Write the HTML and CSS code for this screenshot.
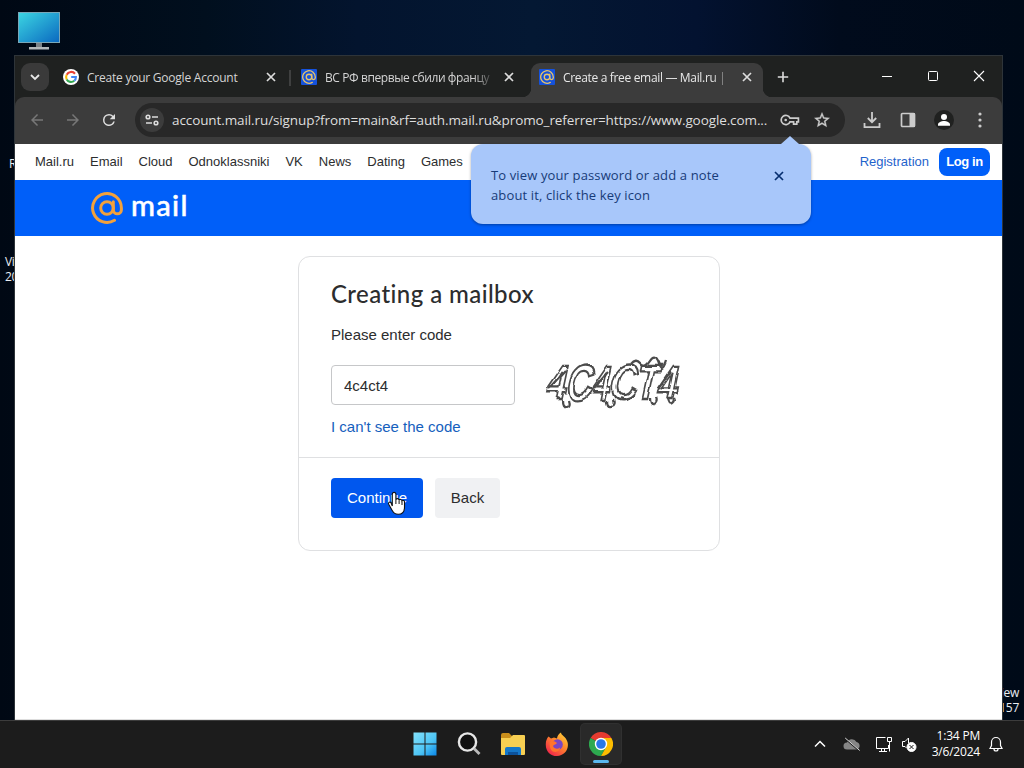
FILE: index.html
```html
<!doctype html>
<html lang="en">
<head>
<meta charset="utf-8">
<meta name="viewport" content="width=device-width,initial-scale=1.0">
<title>Create a free email — Mail.ru</title>
<link rel="stylesheet" href="styles.css">
</head>
<body>
<svg width="0" height="0" class="defs">
	<defs>
		<symbol id="at" viewBox="0 0 32 32">
			<circle cx="16" cy="16" r="6.3" fill="none" stroke="currentColor" stroke-width="3"/>
			<path d="M22.3 9.7v8.1a4.05 4.05 0 0 0 8.1 0V16A14.4 14.4 0 1 0 23.5 28.3" fill="none" stroke="currentColor" stroke-width="3" stroke-linecap="round"/>
		</symbol>
		<symbol id="cross" viewBox="0 0 10 10">
			<path d="M1 1l8 8M9 1L1 9" fill="none" stroke="currentColor" stroke-width="1.7"/>
		</symbol>
		<filter id="rough" x="-5%" y="-10%" width="110%" height="120%">
			<feTurbulence type="fractalNoise" baseFrequency="0.05" numOctaves="1" seed="4"/>
			<feDisplacementMap in="SourceGraphic" scale="8" xChannelSelector="R" yChannelSelector="G"/>
			<feGaussianBlur stdDeviation="0.4"/>
		</filter>
	</defs>
</svg>
<div class="desktop">
	<!-- desktop shortcuts -->
	<svg class="pc-icon" width="42" height="39" viewBox="0 0 42 39">
		<defs><linearGradient id="screen" x1="0" y1="0" x2="1" y2="1"><stop offset="0" stop-color="#3cd6e2"/><stop offset="1" stop-color="#0a68c0"/></linearGradient></defs>
		<rect x=".5" y=".5" width="41" height="30" fill="url(#screen)" stroke="#7aa7b8"/>
		<path d="M18 31h6v4h-6z" fill="#7b8287"/><path d="M11 35h20v2.5H11z" fill="#b3b8bb"/>
	</svg>
	<span class="label label-r">R</span>
	<span class="label label-v">Vi<br>20</span>
	<span class="label label-w">iew<br>157</span>

	<div class="window">
		<div class="tabstrip">
			<div class="tab-search"><svg width="10" height="7" viewBox="0 0 10 7"><path d="M1 1l4 4 4-4" fill="none" stroke="#e8e8e8" stroke-width="1.8"/></svg></div>
			<div class="tab">
				<svg class="favicon" viewBox="0 0 16 16">
					<circle cx="8" cy="8" r="8" fill="#fff"/>
					<g fill="none" stroke-width="2.1">
						<path d="M12 4.7A5 5 0 0 0 3.7 5.7" stroke="#ea4335"/>
						<path d="M3.7 5.7a5 5 0 0 0 0 4.7" stroke="#fbbc05"/>
						<path d="M3.7 10.4a5 5 0 0 0 7.6 1.4" stroke="#34a853"/>
						<path d="M11.3 11.8A5 5 0 0 0 12.9 8H8.2" stroke="#4285f4"/>
					</g>
				</svg>
				<span class="tab-title t1">Create your Google Account</span>
				<svg class="tab-close"><use href="#cross"/></svg>
			</div>
			<i class="tab-sep"></i>
			<div class="tab">
				<span class="favicon mail-fav"><svg><use href="#at"/></svg></span>
				<span class="tab-title t2">ВС РФ впервые сбили францу</span>
				<svg class="tab-close"><use href="#cross"/></svg>
			</div>
			<i class="tab-sep off"></i>
			<div class="tab active">
				<span class="favicon mail-fav"><svg><use href="#at"/></svg></span>
				<span class="tab-title t3">Create a free email — Mail.ru |</span>
				<svg class="tab-close"><use href="#cross"/></svg>
			</div>
			<svg class="new-tab" width="12" height="12" viewBox="0 0 12 12"><path d="M6 .8v10.4M.8 6h10.4" stroke="#ddd" stroke-width="1.6"/></svg>
			<div class="win-buttons">
				<svg width="46" height="20" viewBox="0 0 46 20"><path d="M18 10.5h10" stroke="#fff"/></svg>
				<svg width="46" height="20" viewBox="0 0 46 20"><rect x="18.5" y="5.5" width="9" height="9" rx="1" fill="none" stroke="#fff"/></svg>
				<svg width="46" height="20" viewBox="0 0 46 20"><path d="M18 5l10 10M28 5L18 15" stroke="#fff" stroke-width="1.1"/></svg>
			</div>
		</div>

		<div class="toolbar">
			<svg class="nav-btn" viewBox="0 0 24 24" fill="#777"><path d="M20 11H7.83l5.59-5.59L12 4l-8 8 8 8 1.41-1.41L7.83 13H20z"/></svg>
			<svg class="nav-btn" viewBox="0 0 24 24" fill="#777"><path d="M12 4l-1.41 1.41L16.17 11H4v2h12.17l-5.58 5.59L12 20l8-8z"/></svg>
			<svg class="nav-btn" viewBox="0 0 24 24" fill="#ddd"><path d="M17.65 6.35A7.96 7.96 0 0 0 12 4a8 8 0 1 0 7.73 10h-2.08A6 6 0 1 1 12 6c1.66 0 3.14.69 4.22 1.78L13 11h7V4z"/></svg>
			<div class="omnibox">
				<div class="site-info">
					<svg width="14" height="12" viewBox="0 0 14 12" fill="none" stroke="#ddd" stroke-width="1.6"><circle cx="3" cy="3" r="1.8"/><path d="M7 3h6M1 9h6"/><circle cx="11" cy="9" r="1.8"/></svg>
				</div>
				<span class="url">account.mail.ru/signup?from=main&amp;rf=auth.mail.ru&amp;promo_referrer=https://www.google.com...</span>
				<svg class="key" width="20" height="12" viewBox="0 0 20 12" fill="none" stroke="#ccc" stroke-width="1.7"><path d="M10 4.2h8.4v3.6h-1.6v2.4h-3.2V7.8H10A4.6 4.6 0 1 1 10 4.2z"/><circle cx="5.7" cy="6" r="1.3" fill="#ccc" stroke="none"/></svg>
				<svg class="star" width="18" height="18" viewBox="0 0 24 24" fill="#ccc" stroke="#ccc" stroke-width=".5"><path d="M22 9.24l-7.19-.62L12 2 9.19 8.63 2 9.24l5.46 4.73L5.82 21 12 17.27 18.18 21l-1.63-7.03zM12 15.4l-3.76 2.27 1-4.28-3.32-2.88 4.38-.38L12 6.1l1.71 4.04 4.38.38-3.32 2.88 1 4.28z"/></svg>
			</div>
			<div class="actions">
				<svg width="18" height="18" viewBox="0 0 18 18" fill="none" stroke="#ccc" stroke-width="1.8"><path d="M9 1v10M4.8 7L9 11.2 13.2 7M1.5 12v4.2h15V12"/></svg>
				<svg width="18" height="18" viewBox="0 0 18 18"><rect x="2.5" y="2.5" width="13" height="13" rx="1" fill="none" stroke="#ccc" stroke-width="1.7"/><path d="M10.5 2h5.5v14h-5.5z" fill="#ccc"/></svg>
				<svg width="20" height="20" viewBox="0 0 20 20"><circle cx="10" cy="10" r="10" fill="#202120"/><circle cx="10" cy="7" r="3" fill="#fff"/><path d="M4 15.7v-1.4c0-2.1 3.5-3.4 6-3.4s6 1.3 6 3.4v1.4z" fill="#fff"/></svg>
				<svg width="4" height="16" viewBox="0 0 4 16" fill="#ccc"><circle cx="2" cy="2" r="1.6"/><circle cx="2" cy="8" r="1.6"/><circle cx="2" cy="14" r="1.6"/></svg>
			</div>
		</div>

		<div class="page">
			<nav class="portal-nav">
				<a>Mail.ru</a><a>Email</a><a>Cloud</a><a>Odnoklassniki</a><a>VK</a><a>News</a><a>Dating</a><a>Games</a>
				<a class="registration">Registration</a>
				<button class="login">Log in</button>
			</nav>
			<header class="brand">
				<svg class="brand-at"><use href="#at"/></svg>
				<span class="brand-name">mail</span>
			</header>
			<form class="card">
				<div class="card-body">
					<h1>Creating a mailbox</h1>
					<p>Please enter code</p>
					<div class="code-row">
						<input type="text" value="4c4ct4">
						<svg class="captcha" width="142" height="60" viewBox="0 0 142 60">
							<g filter="url(#rough)">
								<g transform="skewX(-12)" class="captcha-text">
									<text x="12" y="47" textLength="130" lengthAdjust="spacingAndGlyphs">4C4CT4</text>
								</g>
								<g fill="none" stroke="#4b4b4b" stroke-width="2.3">
									<path d="M19 48q0 7 4 6t2-7M64 48q0 7 4 6t2-7M107 46q0 7 4 6t2-7M125 47q1 7 4 5t1-6M88 13q5-6 9-1t9-3 9 3 8-2"/>
									<path d="M6 37l17-18M50 37l16-18M116 36l12-17M77 45q7 4 14-4"/>
								</g>
							</g>
						</svg>
					</div>
					<a class="help">I can't see the code</a>
				</div>
				<div class="card-footer">
					<button type="button" class="btn primary">Continue</button>
					<button type="button" class="btn">Back</button>
				</div>
			</form>
		</div>
	</div>

	<div class="key-hint">
		<p>To view your password or add a note<br>about it, click the key icon</p>
		<svg width="10" height="10"><use href="#cross"/></svg>
	</div>

	<svg class="cursor" width="19" height="25" viewBox="0 0 19 25">
		<path d="M5.3 15V3.2a1.8 1.8 0 0 1 3.6 0V9c.2-1.9 3.1-1.8 3.2.3.6-1.4 2.8-1.1 2.9.7.8-1 2.5-.5 2.5 1.1v5c0 4.5-2.2 7.2-6.3 7.2-3.2 0-4.8-1.5-6-3.8l-3.5-6.2c-.9-1.7 1-3 2.3-1.6z" fill="#fff" stroke="#111" stroke-width="1.1"/>
		<path d="M8.9 9v4M12.1 9.5V13M15 10.5V14" stroke="#111"/>
	</svg>

	<div class="taskbar">
		<div class="apps">
			<span class="app"><svg width="24" height="24" viewBox="0 0 24 24">
				<defs><linearGradient id="win" x1="0" y1="0" x2="1" y2="1"><stop offset="0" stop-color="#84e2fb"/><stop offset=".6" stop-color="#4cc4f5"/><stop offset="1" stop-color="#0a86e8"/></linearGradient></defs>
				<path d="M.5.5h11v11H.5zM12.5.5h11v11h-11zM.5 12.5h11v11H.5zM12.5 12.5h11v11h-11z" fill="url(#win)"/></svg></span>
			<span class="app"><svg width="24" height="24" viewBox="0 0 24 24"><circle cx="10.5" cy="10" r="8.6" fill="#111" stroke="#e6e6e6" stroke-width="2.4"/><path d="M17 16.5l5.5 5.5" stroke="#bbb" stroke-width="2.8"/></svg></span>
			<span class="app"><svg width="26" height="24" viewBox="0 0 26 24"><path d="M1 3q0-2 2-2h6l3 3h12q1 0 1 1v4H1z" fill="#c98e1b"/><path d="M1 6h9l3-3h11q1 0 1 1v18q0 1-1 1H2q-1 0-1-1z" fill="#f7cf52"/><path d="M5 23v-6q0-2 2-2h12q2 0 2 2v6z" fill="#1477c9"/><path d="M8 23v-3h10v3z" fill="#0c529b"/></svg></span>
			<span class="app"><svg width="24" height="24" viewBox="0 0 24 24">
				<defs><linearGradient id="fox" x1="1" y1="0" x2=".2" y2="1"><stop offset="0" stop-color="#ffe23d"/><stop offset=".45" stop-color="#ff8a2b"/><stop offset="1" stop-color="#f0204c"/></linearGradient></defs>
				<path d="M3.5 4.5l2.5 2 3-1 3 1C12 4 14 1.5 16 .5c0 3 5 4 6.5 9.5C24.5 17.5 19 24 12 24S.5 19 .8 12c0-3 1-5.5 2.7-7.5z" fill="url(#fox)"/>
				<circle cx="12.5" cy="12.5" r="5.3" fill="#7846c4"/><path d="M5 10c2-2 5-1 7 1-1 2-3 1-4 3 1 3 5 3.5 7 1.5 0 3-3 5-6 4.3S4 15 5 10z" fill="#ff742d"/></svg></span>
			<span class="app current"><svg width="24" height="24" viewBox="0 0 24 24">
				<path d="M12 12L1.6 6A12 12 0 0 1 22.4 6z" fill="#e53b30"/>
				<path d="M12 12L1.6 6A12 12 0 0 0 12 24l5.2-9z" fill="#2da94f"/>
				<path d="M12 6h10.4A12 12 0 0 1 12 24l5.2-9z" fill="#fdbd00"/>
				<circle cx="12" cy="12" r="6.2" fill="#fff"/><circle cx="12" cy="12" r="4.8" fill="#2877e8"/></svg></span>
		</div>
		<div class="tray">
			<svg class="up" width="12" height="8" viewBox="0 0 12 8"><path d="M1 6.5l5-5 5 5" fill="none" stroke="#fff" stroke-width="1.5"/></svg>
			<svg class="cloud" width="18" height="14" viewBox="0 0 18 14"><path d="M4 12.5a3.5 3.5 0 0 1 0-7A5.2 5.2 0 0 1 13.5 5a3.9 3.9 0 0 1 .5 7.5z" fill="#858585"/><path d="M1.5 1l14.5 12.5" stroke="#1c1c1c" stroke-width="1.6"/><path d="M2.2 1l14.5 12.5" stroke="#ddd"/></svg>
			<svg class="net" width="17" height="17" viewBox="0 0 17 17" fill="none" stroke="#fff"><path d="M10.5 1.5h-9v11h12V9M4 15.5h8M6.5 12.5v3M9.5 12.5v3M12.5 1.5h4v4h-4zM14.5 5.5v10"/></svg>
			<svg class="sound" width="16" height="15" viewBox="0 0 16 15" fill="none" stroke="#fff"><path d="M7.5 6V1L4 4.5H1.5v5H4l1.5 1.5"/><circle cx="10.5" cy="10" r="4.5" fill="#fff"/><path d="M8.5 8l4 4M12.5 8l-4 4" stroke="#1c1c1c"/></svg>
			<div class="clock">1:34 PM<br>3/6/2024</div>
			<svg class="bell" width="14" height="16" viewBox="0 0 14 16" fill="none" stroke="#fff" stroke-width="1.2"><path d="M1 12.5l1.5-3V6a4.5 4.5 0 0 1 9 0v3.5l1.5 3zM5 13a2 2 0 0 0 4 0"/></svg>
		</div>
	</div>
</div>
</body>
</html>
```
FILE: styles.css
```css
*{
	box-sizing: border-box;
}
body{
	margin: 0;
	overflow: hidden;
	font-family: "Liberation Sans", Arial, sans-serif;
}
svg{
	display: block;
	flex: none;
}
.defs{
	position: absolute;
}
.desktop{
	position: relative;
	width: 1024px;
	height: 768px;
	overflow: hidden;
	background: linear-gradient(90deg, #000814 0%, #010f1e 20%, #03142e 35%, #041833 52%, #031230 68%, #010b1c 82%, #000a18 100%);
}
.pc-icon{
	position: absolute;
	left: 18px;
	top: 12px;
}
.label{
	position: absolute;
	color: #e9edf2;
	font: 12px/15px "Open Sans", sans-serif;
	letter-spacing: -0.3px;
}
.label-r{
	left: 9px;
	top: 156px;
}
.label-v{
	left: 5px;
	top: 254px;
}
.label-w{
	right: 5px;
	top: 685px;
	text-align: right;
}

/* browser window */
.window{
	position: absolute;
	left: 15px;
	top: 56px;
	width: 987px;
	height: 664px;
	display: flex;
	flex-direction: column;
	background: #1f2020;
	box-shadow: 0 0 0 1px #2e3439;
}
.tabstrip{
	height: 41px;
	display: flex;
	align-items: flex-start;
	padding: 7px 0 0 6px;
	background: #1f2120;
}
.tab-search{
	width: 28px;
	height: 28px;
	margin-right: 6px;
	border-radius: 9px;
	background: #3a3a3a;
	display: flex;
	align-items: center;
	justify-content: center;
}
.tab{
	width: 232px;
	height: 28px;
	padding: 0 11px 0 8px;
	display: flex;
	align-items: center;
	flex: none;
}
.tab.active{
	position: relative;
	height: 34px;
	padding-bottom: 6px;
	border-radius: 9px 9px 0 0;
	background: #3c3c3c;
}
.tab.active::before,
.tab.active::after{
	content: "";
	position: absolute;
	bottom: 0;
	width: 9px;
	height: 9px;
}
.tab.active::before{
	left: -9px;
	background: radial-gradient(circle at 0 0, transparent 9px, #3c3c3c 9.5px);
}
.tab.active::after{
	right: -9px;
	background: radial-gradient(circle at 100% 0, transparent 9px, #3c3c3c 9.5px);
}
.favicon{
	width: 16px;
	height: 16px;
	flex: none;
	margin-right: 8px;
}
.mail-fav{
	background: #1552dc;
	border-radius: 1px;
	padding: 1px;
	color: #e8c46a;
}
.mail-fav svg{
	width: 14px;
	height: 14px;
}
.tab-title{
	width: 168px;
	margin-top: 2px;
	white-space: nowrap;
	font: 12px/20px "Open Sans", sans-serif;
	letter-spacing: -0.23px;
	color: #d4d4d4;
}
.t2,
.t3{
	-webkit-mask-image: linear-gradient(90deg, #000 148px, transparent 170px);
	mask-image: linear-gradient(90deg, #000 148px, transparent 170px);
}
.t2{
	letter-spacing: -0.4px;
}
.t3{
	letter-spacing: -0.33px;
	color: #e8e8e8;
}
.tab-close{
	width: 10px;
	height: 10px;
	margin-left: auto;
	color: #ddd;
}
.tab-sep{
	width: 2px;
	height: 16px;
	margin: 7px 2px 0;
	background: #3f4040;
	flex: none;
}
.tab-sep.off{
	background: none;
}
.new-tab{
	margin: 8px 0 0 14px;
}
.win-buttons{
	display: flex;
	margin: 3px 0 0 auto;
}
.toolbar{
	height: 47px;
	padding: 0 20px 1px 13px;
	display: flex;
	align-items: center;
	border-radius: 9px 9px 0 0;
	background: #3c3c3c;
}
.nav-btn{
	width: 18px;
	height: 18px;
	margin-right: 18px;
}
.omnibox{
	width: 710px;
	height: 34px;
	margin-left: -1px;
	border-radius: 17px;
	background: #282828;
	display: flex;
	align-items: center;
	padding: 0 14px 0 5px;
}
.site-info{
	width: 24px;
	height: 24px;
	border-radius: 12px;
	background: #3c3c3c;
	display: flex;
	align-items: center;
	justify-content: center;
	margin-right: 8px;
}
.url{
	font: 13.5px/20px "Open Sans", sans-serif;
	letter-spacing: -0.1px;
	color: #dedede;
	white-space: nowrap;
	width: 600px;
}
.key{
	margin-left: auto;
}
.star{
	margin-left: 13px;
}
.actions{
	margin-left: auto;
	display: flex;
	align-items: center;
	gap: 18px;
}
.actions svg:nth-child(3){
	margin-left: -1px;
}
.actions svg:last-child{
	margin-left: 6px;
}

/* mail.ru page */
.page{
	flex: 1;
	background: #fff;
	border-bottom: 1px solid #ddd;
}
.portal-nav{
	height: 36px;
	padding: 0 12px 0 20px;
	display: flex;
	align-items: center;
	gap: 16px;
	font-size: 13px;
	color: #2c2d2e;
}
.portal-nav a{
	margin-top: -2px;
}
.portal-nav .registration{
	margin-left: auto;
	color: #1f63cc;
}
.login{
	width: 51px;
	height: 28px;
	margin-left: -6px;
	padding: 0 0 2px;
	border: 0;
	border-radius: 8px;
	background: #005ff9;
	color: #fff;
	font: bold 13px "Liberation Sans", Arial, sans-serif;
	letter-spacing: -0.4px;
}
.brand{
	height: 56px;
	padding-left: 76px;
	display: flex;
	align-items: center;
	background: #005ff9;
}
.brand-at{
	width: 32px;
	height: 32px;
	color: #f2a13c;
}
.brand-name{
	margin: -6px 0 0 8px;
	color: #fff;
	font: 500 29px/34px Lato, sans-serif;
	letter-spacing: 1.3px;
	-webkit-text-stroke: 0.5px #fff;
}
.card{
	width: 422px;
	height: 295px;
	margin: 20px 0 0 283px;
	border: 1px solid #dfe0e2;
	border-radius: 12px;
	font-size: 15px;
	color: #2c2d2e;
}
.card-body{
	height: 201px;
	padding: 21px 32px 0;
	border-bottom: 1px solid #dfe0e2;
}
.card h1{
	margin: 0;
	font: 500 24px/32px Lato, sans-serif;
	letter-spacing: 0.42px;
}
.card p{
	margin: 15px 0 0;
	line-height: 20px;
}
.code-row{
	display: flex;
	align-items: center;
	height: 60px;
	margin-top: 10px;
}
.code-row input{
	width: 184px;
	height: 40px;
	padding: 0 12px;
	border: 1px solid #c6c7c9;
	border-radius: 4px;
	font: 15px "Liberation Sans", Arial, sans-serif;
	color: #2c2d2e;
}
.captcha{
	margin: -6px 0 0 28px;
	overflow: visible;
}
.captcha-text{
	font: bold 48px "Liberation Sans", Arial, sans-serif;
	fill: #fff;
	stroke: #4b4b4b;
	stroke-width: 2.3;
}
.help{
	display: block;
	margin-top: 2px;
	line-height: 20px;
	color: #1560bd;
}
.card-footer{
	padding: 20px 32px;
	display: flex;
	gap: 12px;
}
.btn{
	width: 65px;
	height: 40px;
	padding: 0 0 2px;
	border: 0;
	border-radius: 4px;
	background: #f0f1f3;
	color: #2c2d2e;
	font: 15px "Liberation Sans", Arial, sans-serif;
}
.btn.primary{
	width: 92px;
	background: #0057ee;
	color: #fff;
}

/* password bubble */
.key-hint{
	position: absolute;
	left: 471px;
	top: 144px;
	width: 340px;
	height: 80px;
	padding: 21px 27px 0 20px;
	display: flex;
	justify-content: space-between;
	border-radius: 12px;
	background: #a8c7fa;
	color: #173b78;
	box-shadow: 0 1px 3px rgba(0,0,0,.35);
}
.key-hint::before{
	content: "";
	position: absolute;
	left: 310px;
	top: -8px;
	border: solid transparent;
	border-width: 0 9px 8px;
	border-bottom-color: #a8c7fa;
}
.key-hint p{
	margin: 0;
	white-space: nowrap;
	font: 13px/20px "Open Sans", sans-serif;
	letter-spacing: 0.13px;
}
.key-hint svg{
	margin-top: 6px;
	color: #062e6f;
}
.cursor{
	position: absolute;
	left: 387px;
	top: 491px;
}

/* taskbar */
.taskbar{
	position: absolute;
	left: 0;
	right: 0;
	bottom: 0;
	height: 48px;
	background: #1c1c1c;
	border-top: 1px solid #3c3c3c;
	display: flex;
	justify-content: space-between;
	padding: 0 21px 1px 405px;
}
.apps{
	display: flex;
	align-items: center;
	gap: 4px;
}
.app{
	position: relative;
	width: 40px;
	height: 40px;
	display: flex;
	align-items: center;
	justify-content: center;
}
.app.current{
	border-radius: 4px;
	background: #292929;
	box-shadow: 0 0 0 1px #303030;
}
.app.current::after{
	content: "";
	position: absolute;
	left: 12px;
	bottom: 1px;
	width: 16px;
	height: 3px;
	border-radius: 2px;
	background: #5ab7ee;
}
.tray{
	display: flex;
	align-items: center;
}
.cloud{
	margin-left: 17px;
}
.net{
	margin-left: 14px;
}
.sound{
	margin-left: 9px;
}
.clock{
	width: 50px;
	margin: 0 9px 0 13px;
	font: 12px/16px "Open Sans", sans-serif;
	letter-spacing: -0.2px;
	text-align: right;
	white-space: nowrap;
	color: #fff;
}
```
